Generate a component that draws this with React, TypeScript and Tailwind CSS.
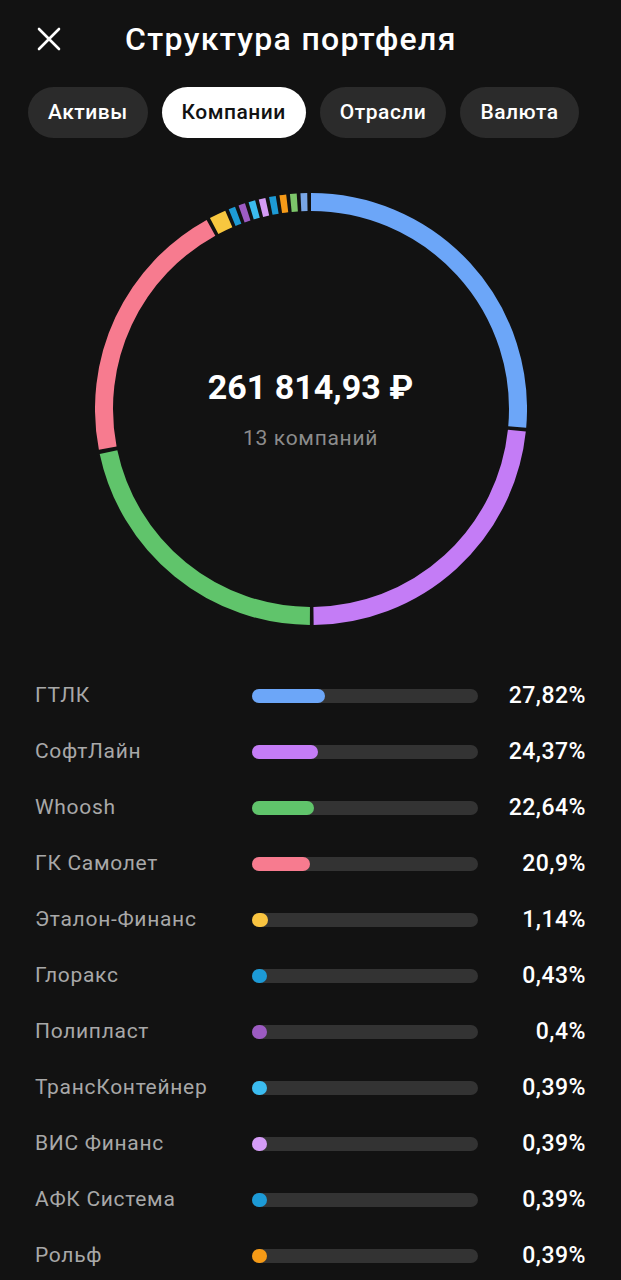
const segments: [number, number, string][] = [
  [0, 95, '#6ca6f8'],
  [96, 179.3, '#c47cf6'],
  [180.3, 258, '#60c46b'],
  [259.1, 331.1, '#f77b8f'],
  [332.1, 336.6, '#f8c73f'],
  [337.6, 339.4, '#1d9bd6'],
  [340.4, 342.2, '#9d5cc4'],
  [343.2, 345, '#3bbbef'],
  [346, 347.8, '#d49bf6'],
  [348.8, 350.6, '#1d9bd6'],
  [351.6, 353.4, '#f59a18'],
  [354.4, 356.2, '#7dc66a'],
  [357.2, 359, '#79a6e6'],
];

const companies = [
  { name: 'ГТЛК', pct: 27.82, label: '27,82%', color: '#6ca6f8' },
  { name: 'СофтЛайн', pct: 24.37, label: '24,37%', color: '#c47cf6' },
  { name: 'Whoosh', pct: 22.64, label: '22,64%', color: '#60c46b' },
  { name: 'ГК Самолет', pct: 20.9, label: '20,9%', color: '#f77b8f' },
  { name: 'Эталон-Финанс', pct: 1.14, label: '1,14%', color: '#f9c440' },
  { name: 'Глоракс', pct: 0.43, label: '0,43%', color: '#1c9ad6' },
  { name: 'Полипласт', pct: 0.4, label: '0,4%', color: '#9c5bc2' },
  { name: 'ТрансКонтейнер', pct: 0.39, label: '0,39%', color: '#3bbcf0' },
  { name: 'ВИС Финанс', pct: 0.39, label: '0,39%', color: '#d59cf7' },
  { name: 'АФК Система', pct: 0.39, label: '0,39%', color: '#1c9ad6' },
  { name: 'Рольф', pct: 0.39, label: '0,39%', color: '#f59a16' },
];

const tabs = ['Активы', 'Компании', 'Отрасли', 'Валюта'];

const C = 216;
const R = 207;

const pt = (a: number) => {
  const rad = (a * Math.PI) / 180;
  return [C + R * Math.sin(rad), C - R * Math.cos(rad)];
};

const arc = (a0: number, a1: number) => {
  const [x0, y0] = pt(a0);
  const [x1, y1] = pt(a1);
  const large = a1 - a0 > 180 ? 1 : 0;
  return `M ${x0} ${y0} A ${R} ${R} 0 ${large} 1 ${x1} ${y1}`;
};

export default function App() {
  return (
    <div className="min-h-screen w-full bg-[#121212] text-white font-['Roboto',sans-serif]">
      <div className="flex h-[78px] items-center">
        <svg className="ml-[37px]" width="24" height="24" viewBox="0 0 24 24">
          <path d="M2 2 L22 22 M22 2 L2 22" stroke="white" strokeWidth={2.6} strokeLinecap="round" />
        </svg>
        <h1 className="ml-[64px] text-[32px] font-medium leading-none tracking-[1.35px]">Структура портфеля</h1>
      </div>

      <div className="mt-[9px] flex gap-[14px] px-[28px]">
        {tabs.map((t) => (
          <div
            key={t}
            className={
              t === 'Компании'
                ? 'flex h-[51px] items-center rounded-full bg-white px-[20px] text-[21px] font-medium tracking-[0.5px] text-[#121212]'
                : 'flex h-[51px] items-center rounded-full bg-[#2b2b2b] px-[20px] text-[21px] font-medium tracking-[0.5px] text-white'
            }
          >
            {t}
          </div>
        ))}
      </div>

      <div className="relative mx-auto mt-[55px] h-[432px] w-[432px]">
        <svg width="432" height="432" viewBox="0 0 432 432">
          {segments.map(([a0, a1, c], i) => (
            <path key={i} d={arc(a0, a1)} stroke={c} strokeWidth={18} fill="none" />
          ))}
        </svg>
        <div className="absolute inset-0 flex flex-col items-center justify-center">
          <div className="text-[34px] font-bold leading-none">261 814,93 ₽</div>
          <div className="mt-[24px] text-[21px] leading-none tracking-[0.7px] text-[#8c8c8c]">13 компаний</div>
        </div>
      </div>

      <div className="mt-[43px] flex flex-col">
        {companies.map((c) => (
          <div key={c.name} className="flex h-[56px] items-center pl-[35px] pr-[35px]">
            <div className="w-[217px] text-[21px] tracking-[0.7px] text-[#a8a8a8]">{c.name}</div>
            <div className="h-[14px] w-[226px] rounded-full bg-[#333333]">
              <div
                className="h-full rounded-full"
                style={{ width: `${14 + (c.pct / 100) * 212}px`, backgroundColor: c.color }}
              />
            </div>
            <div className="flex-1 text-right text-[23px] font-medium tracking-[0.5px]">{c.label}</div>
          </div>
        ))}
      </div>
    </div>
  );
}
